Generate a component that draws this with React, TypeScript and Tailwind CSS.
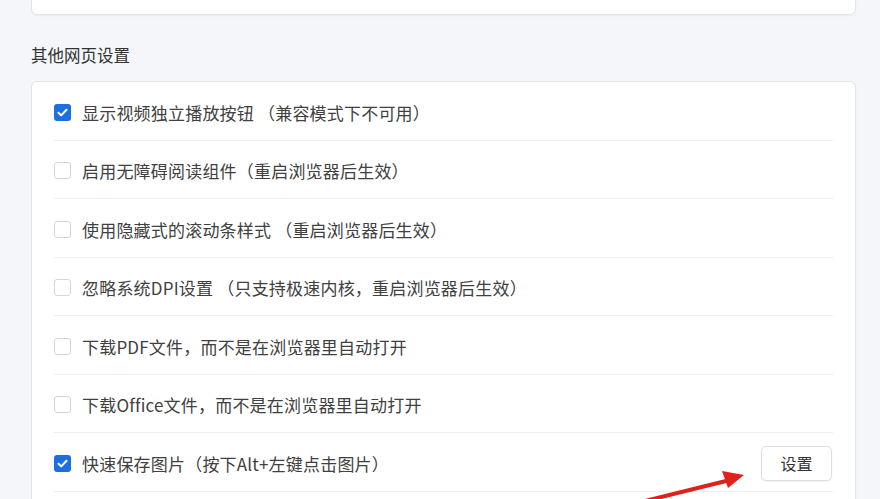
const rows = [
  { label: "显示视频独立播放按钮 （兼容模式下不可用）", checked: true },
  { label: "启用无障碍阅读组件（重启浏览器后生效）", checked: false },
  { label: "使用隐藏式的滚动条样式 （重启浏览器后生效）", checked: false },
  { label: "忽略系统DPI设置 （只支持极速内核，重启浏览器后生效）", checked: false },
  { label: "下载PDF文件，而不是在浏览器里自动打开", checked: false },
  { label: "下载Office文件，而不是在浏览器里自动打开", checked: false },
  { label: "快速保存图片（按下Alt+左键点击图片）", checked: true, button: "设置" },
];

function Checkbox({ checked }: { checked: boolean }) {
  if (checked) {
    return (
      <span className="flex h-[17px] w-[17px] shrink-0 items-center justify-center rounded-[3px] bg-[#1b6fe0]">
        <svg viewBox="0 0 16 16" className="h-[13px] w-[13px]">
          <path d="M3 8.3 L6.4 11.5 L13 4.6" fill="none" stroke="white" strokeWidth="2.5" strokeLinecap="round" strokeLinejoin="round" />
        </svg>
      </span>
    );
  }
  return <span className="h-[17px] w-[17px] shrink-0 rounded-[3px] border border-[#d4d6db] bg-white" />;
}

export default function App() {
  return (
    <div
      className="relative h-[499px] w-[880px] overflow-hidden bg-[#f5f6fa] text-[#333]"
      style={{ fontFamily: '"Noto Sans CJK SC", "Noto Sans", sans-serif' }}
    >
      <div className="ml-[31px] w-[825px]">
        {/* previous card, mostly scrolled away */}
        <div className="-mt-[26px] h-[41px] rounded-[6px] border border-[#e3e5ea] bg-white shadow-[0_1px_2px_rgba(0,0,0,0.04)]" />

        <h2 className="mt-[27px] h-[26px] text-[16.5px] leading-[26px] text-[#333]">其他网页设置</h2>

        <div className="mt-[13px] rounded-[6px] border border-[#e3e5ea] bg-white px-[22px] pb-[40px] shadow-[0_1px_2px_rgba(0,0,0,0.04)]">
          {rows.map((row) => (
            <div
              key={row.label}
              className="flex h-[58.5px] items-center border-b border-[#eceef1] pt-[3px]"
            >
              <Checkbox checked={row.checked} />
              <span className="ml-[11px] flex-1 text-[17px] tracking-[0.2px] text-[#404040]">{row.label}</span>
              {row.button && (
                <button className="mr-px h-[35px] w-[71px] rounded-[5px] border border-[#dcdee3] bg-white text-[16px] text-[#333] shadow-[0_1px_2px_rgba(0,0,0,0.05)]">
                  {row.button}
                </button>
              )}
            </div>
          ))}
        </div>
      </div>

      {/* red annotation arrow */}
      <svg className="pointer-events-none absolute left-0 top-0" width="880" height="499" viewBox="0 0 880 499">
        <path d="M641 502 L726 481" stroke="#e0201b" strokeWidth="4" strokeLinecap="round" fill="none" />
        <polygon points="744,475 722,471 728,488" fill="#e0201b" />
      </svg>
    </div>
  );
}
